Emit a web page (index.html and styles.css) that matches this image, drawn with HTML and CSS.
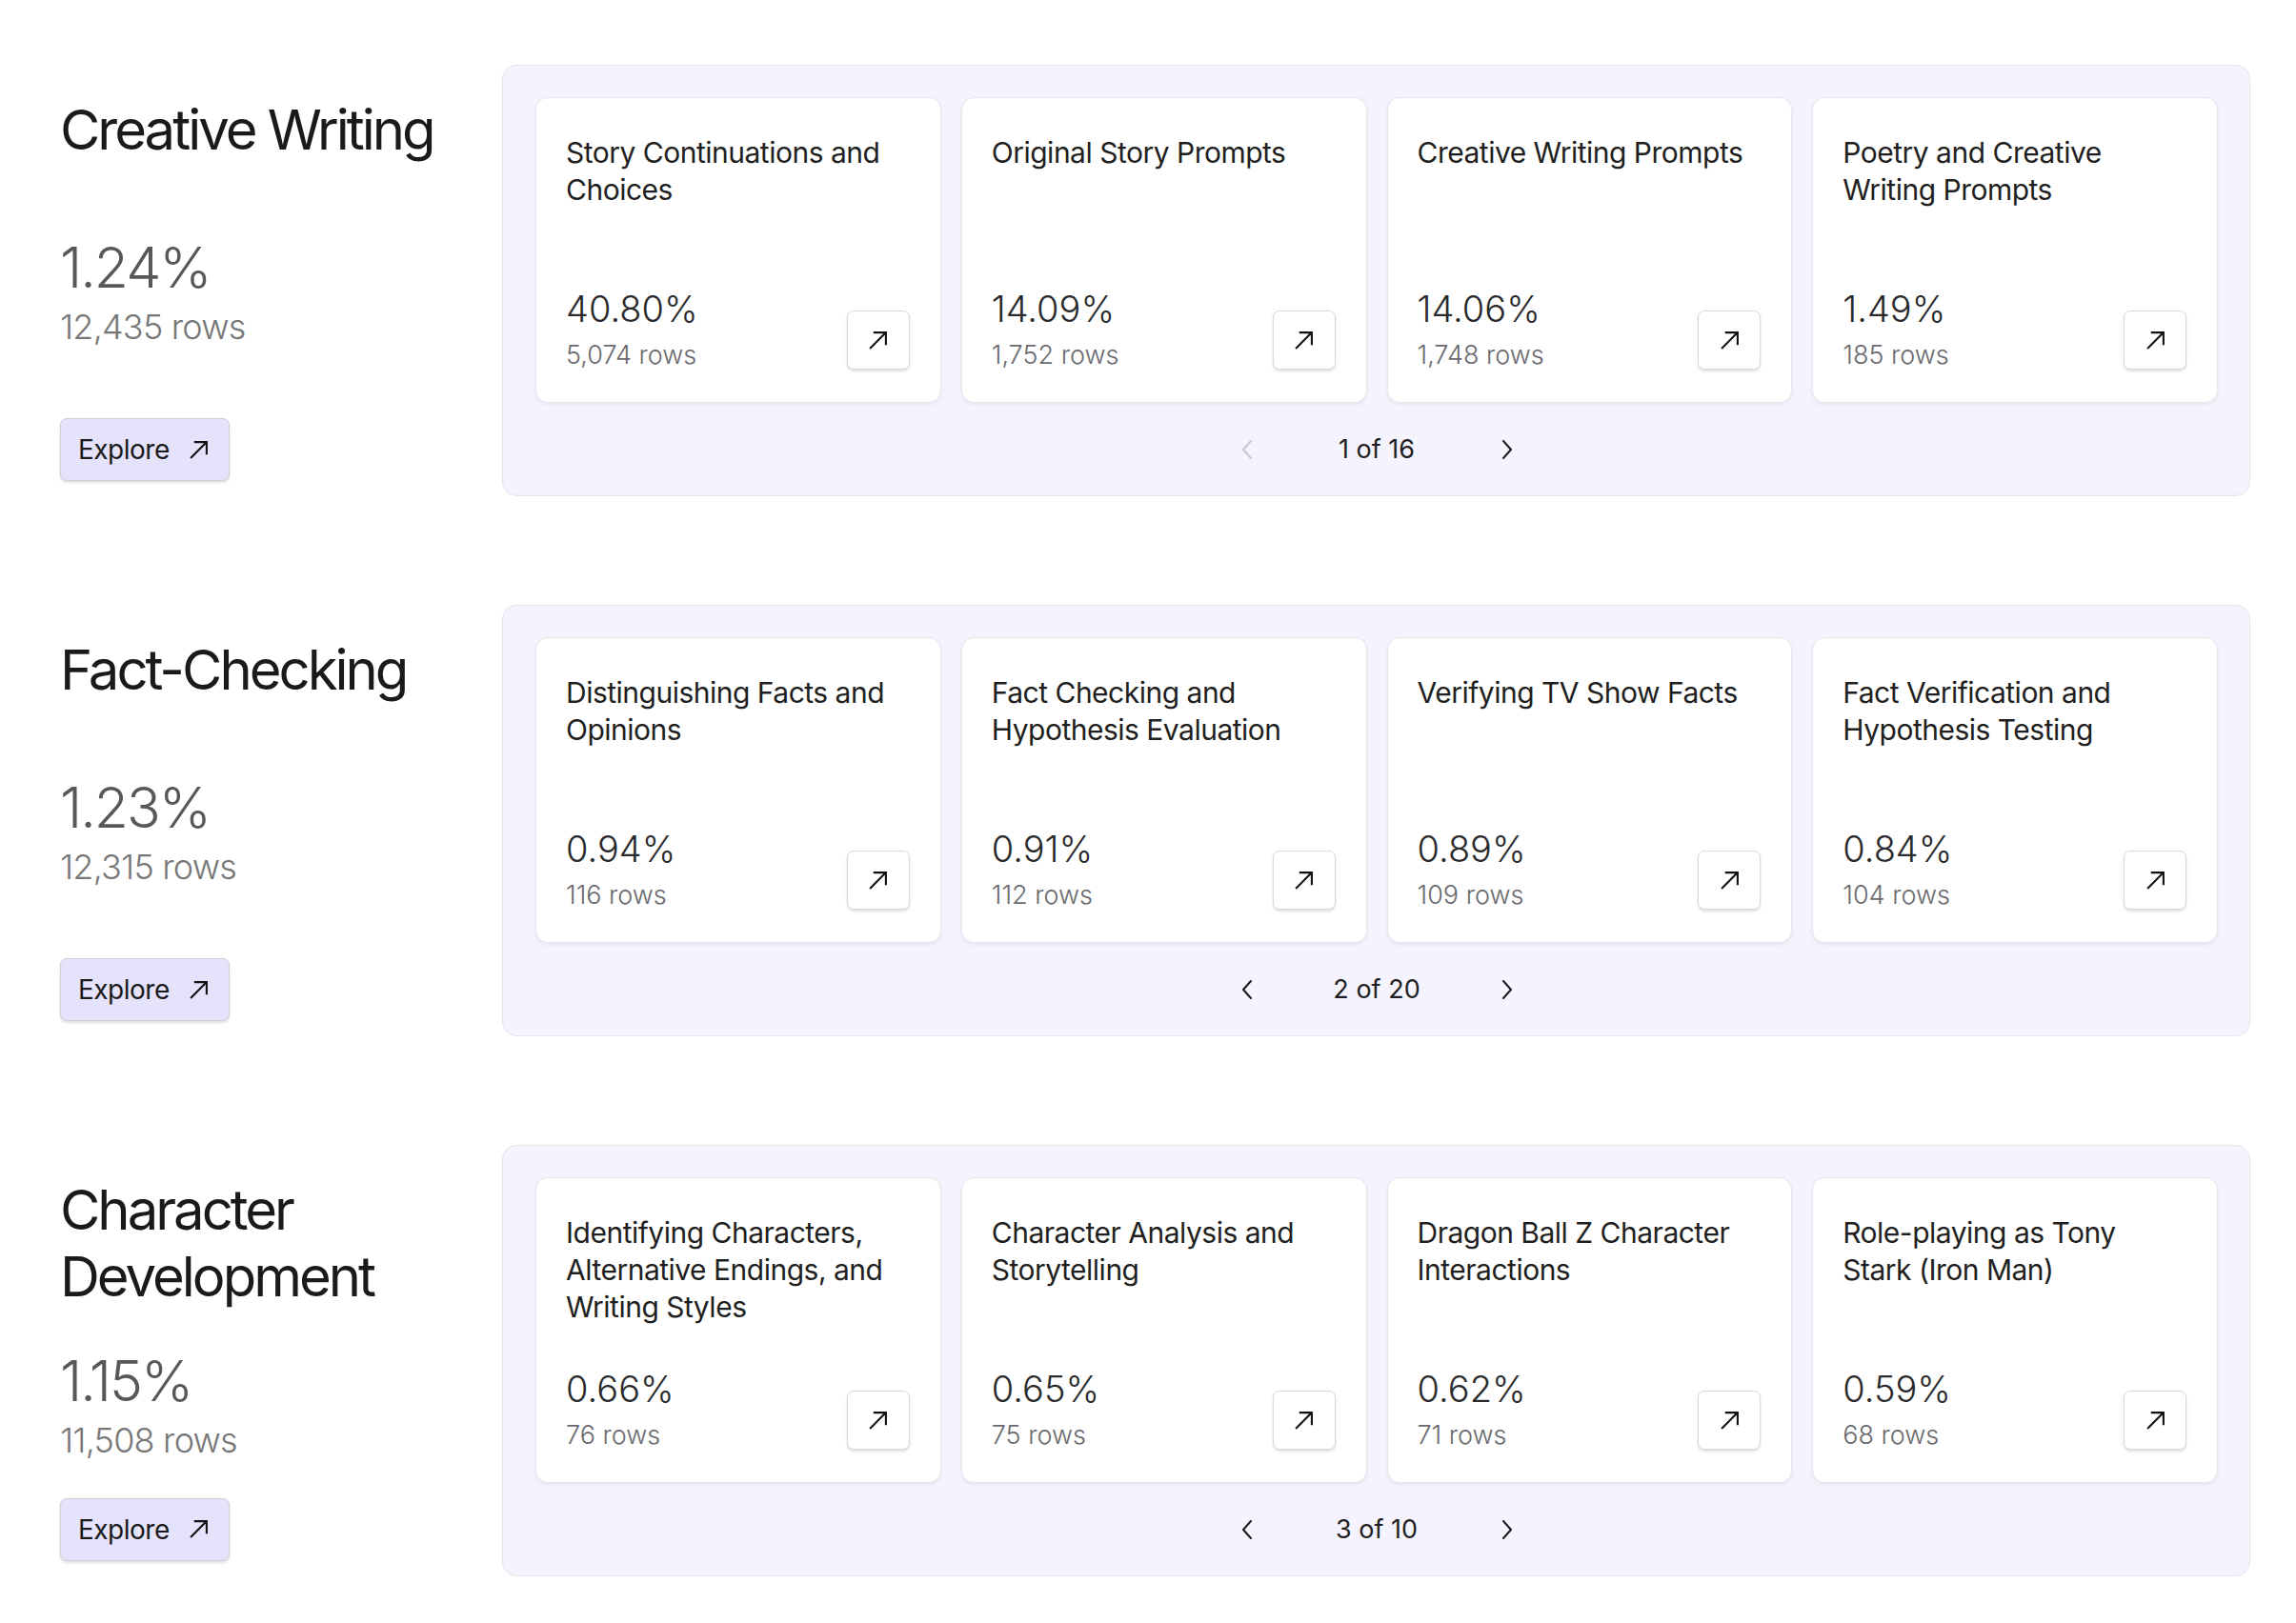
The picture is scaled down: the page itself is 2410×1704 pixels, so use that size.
FILE: index.html
```html
<!DOCTYPE html>
<html lang="en">
<head>
<meta charset="utf-8">
<title>Categories</title>
<link rel="stylesheet" href="styles.css">
</head>
<body>
<main class="page">

  <section class="section">
    <div class="summary">
      <h2 class="summary-title">Creative Writing</h2>
      <div class="summary-stats">
        <div class="summary-pct">1.24%</div>
        <div class="summary-rows">12,435 rows</div>
      </div>
      <div><button class="explore">Explore <svg class="arrow" viewBox="0 0 20 20"><path d="M2 18 L18 2 M5.5 2 H18 V14.5"/></svg></button></div>
    </div>
    <div class="panel">
      <div class="cards">
        <div class="card">
          <div class="card-title">Story Continuations and Choices</div>
          <div class="card-foot">
            <div><div class="card-pct">40.80%</div><div class="card-rows">5,074 rows</div></div>
            <button class="go"><svg class="arrow" viewBox="0 0 20 20"><path d="M2 18 L18 2 M5.5 2 H18 V14.5"/></svg></button>
          </div>
        </div>
        <div class="card">
          <div class="card-title">Original Story Prompts</div>
          <div class="card-foot">
            <div><div class="card-pct">14.09%</div><div class="card-rows">1,752 rows</div></div>
            <button class="go"><svg class="arrow" viewBox="0 0 20 20"><path d="M2 18 L18 2 M5.5 2 H18 V14.5"/></svg></button>
          </div>
        </div>
        <div class="card">
          <div class="card-title">Creative Writing Prompts</div>
          <div class="card-foot">
            <div><div class="card-pct">14.06%</div><div class="card-rows">1,748 rows</div></div>
            <button class="go"><svg class="arrow" viewBox="0 0 20 20"><path d="M2 18 L18 2 M5.5 2 H18 V14.5"/></svg></button>
          </div>
        </div>
        <div class="card">
          <div class="card-title">Poetry and Creative Writing Prompts</div>
          <div class="card-foot">
            <div><div class="card-pct">1.49%</div><div class="card-rows">185 rows</div></div>
            <button class="go"><svg class="arrow" viewBox="0 0 20 20"><path d="M2 18 L18 2 M5.5 2 H18 V14.5"/></svg></button>
          </div>
        </div>
      </div>
      <div class="pager">
        <button class="chev disabled"><svg viewBox="0 0 12 20"><path d="M10 1 L2 10 L10 19"/></svg></button>
        <span class="pager-text">1 of 16</span>
        <button class="chev"><svg viewBox="0 0 12 20"><path d="M2 1 L10 10 L2 19"/></svg></button>
      </div>
    </div>
  </section>

  <section class="section">
    <div class="summary">
      <h2 class="summary-title">Fact-Checking</h2>
      <div class="summary-stats">
        <div class="summary-pct">1.23%</div>
        <div class="summary-rows">12,315 rows</div>
      </div>
      <div><button class="explore">Explore <svg class="arrow" viewBox="0 0 20 20"><path d="M2 18 L18 2 M5.5 2 H18 V14.5"/></svg></button></div>
    </div>
    <div class="panel">
      <div class="cards">
        <div class="card">
          <div class="card-title">Distinguishing Facts and Opinions</div>
          <div class="card-foot">
            <div><div class="card-pct">0.94%</div><div class="card-rows">116 rows</div></div>
            <button class="go"><svg class="arrow" viewBox="0 0 20 20"><path d="M2 18 L18 2 M5.5 2 H18 V14.5"/></svg></button>
          </div>
        </div>
        <div class="card">
          <div class="card-title">Fact Checking and Hypothesis Evaluation</div>
          <div class="card-foot">
            <div><div class="card-pct">0.91%</div><div class="card-rows">112 rows</div></div>
            <button class="go"><svg class="arrow" viewBox="0 0 20 20"><path d="M2 18 L18 2 M5.5 2 H18 V14.5"/></svg></button>
          </div>
        </div>
        <div class="card">
          <div class="card-title">Verifying TV Show Facts</div>
          <div class="card-foot">
            <div><div class="card-pct">0.89%</div><div class="card-rows">109 rows</div></div>
            <button class="go"><svg class="arrow" viewBox="0 0 20 20"><path d="M2 18 L18 2 M5.5 2 H18 V14.5"/></svg></button>
          </div>
        </div>
        <div class="card">
          <div class="card-title">Fact Verification and Hypothesis Testing</div>
          <div class="card-foot">
            <div><div class="card-pct">0.84%</div><div class="card-rows">104 rows</div></div>
            <button class="go"><svg class="arrow" viewBox="0 0 20 20"><path d="M2 18 L18 2 M5.5 2 H18 V14.5"/></svg></button>
          </div>
        </div>
      </div>
      <div class="pager">
        <button class="chev"><svg viewBox="0 0 12 20"><path d="M10 1 L2 10 L10 19"/></svg></button>
        <span class="pager-text">2 of 20</span>
        <button class="chev"><svg viewBox="0 0 12 20"><path d="M2 1 L10 10 L2 19"/></svg></button>
      </div>
    </div>
  </section>

  <section class="section">
    <div class="summary">
      <h2 class="summary-title">Character Development</h2>
      <div class="summary-stats">
        <div class="summary-pct">1.15%</div>
        <div class="summary-rows">11,508 rows</div>
      </div>
      <div><button class="explore">Explore <svg class="arrow" viewBox="0 0 20 20"><path d="M2 18 L18 2 M5.5 2 H18 V14.5"/></svg></button></div>
    </div>
    <div class="panel">
      <div class="cards">
        <div class="card">
          <div class="card-title">Identifying Characters, Alternative Endings, and Writing Styles</div>
          <div class="card-foot">
            <div><div class="card-pct">0.66%</div><div class="card-rows">76 rows</div></div>
            <button class="go"><svg class="arrow" viewBox="0 0 20 20"><path d="M2 18 L18 2 M5.5 2 H18 V14.5"/></svg></button>
          </div>
        </div>
        <div class="card">
          <div class="card-title">Character Analysis and Storytelling</div>
          <div class="card-foot">
            <div><div class="card-pct">0.65%</div><div class="card-rows">75 rows</div></div>
            <button class="go"><svg class="arrow" viewBox="0 0 20 20"><path d="M2 18 L18 2 M5.5 2 H18 V14.5"/></svg></button>
          </div>
        </div>
        <div class="card">
          <div class="card-title">Dragon Ball Z Character Interactions</div>
          <div class="card-foot">
            <div><div class="card-pct">0.62%</div><div class="card-rows">71 rows</div></div>
            <button class="go"><svg class="arrow" viewBox="0 0 20 20"><path d="M2 18 L18 2 M5.5 2 H18 V14.5"/></svg></button>
          </div>
        </div>
        <div class="card">
          <div class="card-title">Role-playing as Tony Stark (Iron Man)</div>
          <div class="card-foot">
            <div><div class="card-pct">0.59%</div><div class="card-rows">68 rows</div></div>
            <button class="go"><svg class="arrow" viewBox="0 0 20 20"><path d="M2 18 L18 2 M5.5 2 H18 V14.5"/></svg></button>
          </div>
        </div>
      </div>
      <div class="pager">
        <button class="chev"><svg viewBox="0 0 12 20"><path d="M10 1 L2 10 L10 19"/></svg></button>
        <span class="pager-text">3 of 10</span>
        <button class="chev"><svg viewBox="0 0 12 20"><path d="M2 1 L10 10 L2 19"/></svg></button>
      </div>
    </div>
  </section>

</main>
</body>
</html>
```

FILE: styles.css
```css
* { box-sizing: border-box; }

html, body {
  margin: 0;
  background: #ffffff;
}

body {
  font-family: Inter, "Noto Sans", "Liberation Sans", sans-serif;
  color: #1c1c1e;
}

.page {
  display: flex;
  flex-direction: column;
  gap: 114px;
  padding: 68px 48px 40px 63px;
}

.section {
  display: flex;
  gap: 64px;
  align-items: stretch;
}

.summary {
  width: 400px;
  flex: none;
  display: flex;
  flex-direction: column;
  justify-content: space-between;
  padding: 33px 0 16px;
}

.summary-title {
  margin: 0;
  font-size: 58px;
  font-weight: 400;
  line-height: 1.21;
  letter-spacing: -3px;
  color: #1a1a1a;
}

.summary-stats {
  display: flex;
  flex-direction: column;
  gap: 6px;
}

.summary-pct {
  font-size: 59px;
  line-height: 1.21;
  letter-spacing: -2px;
  color: #585858;
  font-weight: 300;
}

.summary-rows {
  font-size: 36px;
  line-height: 1.21;
  letter-spacing: -0.8px;
  color: #777777;
  font-weight: 300;
}

.explore {
  display: inline-flex;
  align-items: center;
  gap: 20px;
  height: 66px;
  padding: 0 21px 0 18px;
  font-family: inherit;
  font-size: 28px;
  letter-spacing: -0.5px;
  color: #1a1a1a;
  background: #e5e2fc;
  border: 1.5px solid #cfcfd6;
  border-radius: 7px;
  box-shadow: 0 2px 3px rgba(0, 0, 0, 0.12);
}

.arrow {
  width: 21px;
  height: 21px;
  fill: none;
  stroke: #111;
  stroke-width: 2;
}

.panel {
  flex: 1;
  background: #f4f3fe;
  border: 1.5px solid #e4e4ea;
  border-radius: 15px;
  padding: 33px 33px 0 34px;
  display: flex;
  flex-direction: column;
}

.cards {
  display: grid;
  grid-template-columns: repeat(4, 1fr);
  gap: 21px;
}

.card {
  height: 321px;
  background: #ffffff;
  border: 1.5px solid #e6e6ec;
  border-radius: 13px;
  box-shadow: 0 2px 4px rgba(0, 0, 0, 0.06);
  padding: 38px 32px 33px 31px;
  display: flex;
  flex-direction: column;
  justify-content: space-between;
}

.card-title {
  font-size: 30px;
  line-height: 39px;
  color: #1f1f21;
  letter-spacing: -0.5px;
}

.card-foot {
  display: flex;
  justify-content: space-between;
  align-items: flex-end;
}

.card-pct {
  font-size: 38px;
  line-height: 1.2;
  color: #2a2a2c;
  font-weight: 340;
}

.card-rows {
  margin-top: 9px;
  font-size: 27px;
  line-height: 1.2;
  color: #6a6a6e;
  font-weight: 300;
}

.go {
  width: 66px;
  height: 62px;
  margin-bottom: 1px;
  display: flex;
  align-items: center;
  justify-content: center;
  background: #ffffff;
  border: 1.5px solid #d8d8de;
  border-radius: 7px;
  box-shadow: 0 2px 3px rgba(0, 0, 0, 0.12);
  padding: 0;
}

.pager {
  height: 97px;
  display: flex;
  align-items: center;
  justify-content: center;
}

.chev {
  width: 44px;
  height: 40px;
  background: none;
  border: none;
  padding: 0;
  display: flex;
  align-items: center;
  justify-content: center;
}

.chev svg {
  width: 12px;
  height: 20px;
  fill: none;
  stroke: #1a1a1a;
  stroke-width: 2;
  stroke-linecap: round;
  stroke-linejoin: round;
}

.chev.disabled svg {
  stroke: #c9c9d0;
}

.pager-text {
  width: 229px;
  text-align: center;
  font-size: 27px;
  color: #1f1f21;
}
```
